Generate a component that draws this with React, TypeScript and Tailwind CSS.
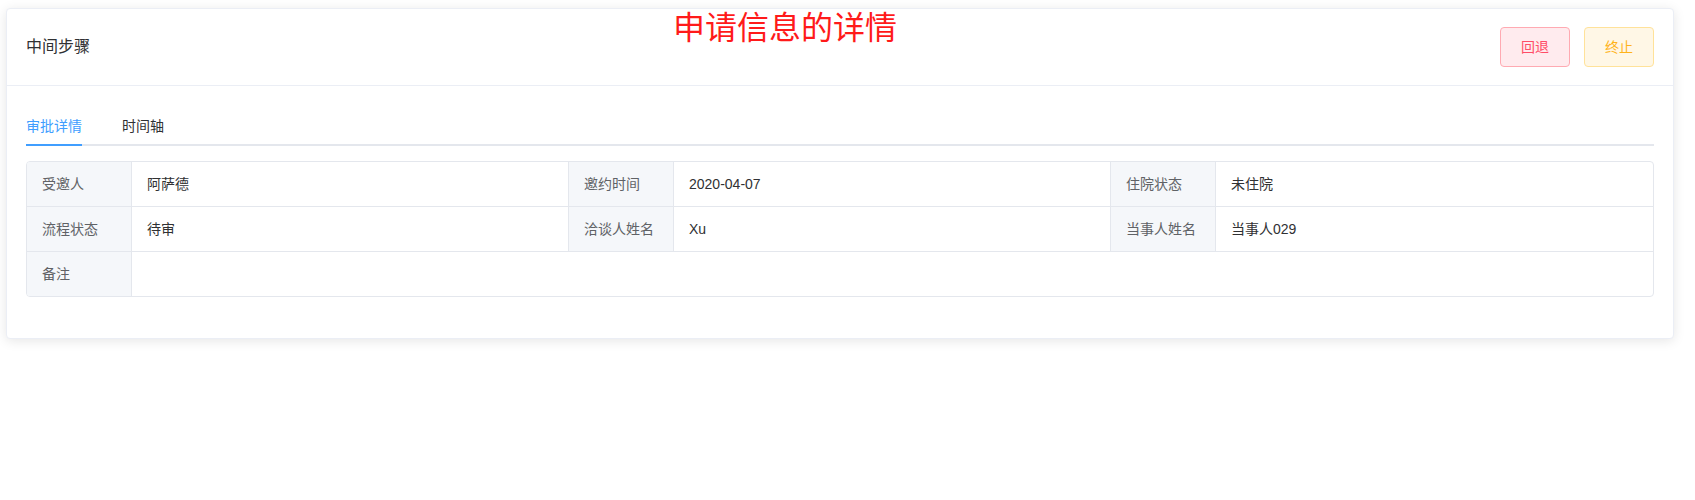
import React from "react";

const font = { fontFamily: '"Liberation Sans", "Noto Sans CJK SC", sans-serif' };

function Label({ children }: { children?: React.ReactNode }) {
  return (
    <div className="h-[44px] flex items-center pl-[15px] bg-[#f5f7fa] text-[14px] text-[#606266] border-r border-[#e4e7ed]">
      {children}
    </div>
  );
}

function Value({ children, last }: { children?: React.ReactNode; last?: boolean }) {
  return (
    <div className={"h-[44px] flex items-center pl-[15px] text-[14px] text-[#303133] " + (last ? "" : "border-r border-[#e4e7ed]")}>
      {children}
    </div>
  );
}

export default function App() {
  return (
    <div className="relative w-[1695px] h-[500px] bg-white" style={font}>
      <div className="pt-[8px] pl-[6px]">
        <div className="w-[1668px] bg-white border border-[#ebeef5] rounded-[4px] shadow-[0_2px_12px_0_rgba(0,0,0,0.1)]">
          <div className="flex items-center justify-between pl-[19px] pr-[19px] py-[18px] border-b border-[#ebeef5]">
            <div className="text-[16px] text-[#303133]">中间步骤</div>
            <div className="flex gap-[14px]">
              <button className="w-[70px] h-[40px] rounded-[4px] border border-[#ffaab2] bg-[#ffebee] text-[#ff4d67] text-[14px] leading-none">
                回退
              </button>
              <button className="w-[70px] h-[40px] rounded-[4px] border border-[#ffe29a] bg-[#fff7e6] text-[#ffb31a] text-[14px] leading-none">
                终止
              </button>
            </div>
          </div>
          <div className="px-[19px] pt-[20px] pb-[41px]">
            <div className="relative flex h-[40px] mb-[15px]">
              <div className="absolute left-0 right-0 bottom-0 h-[2px] bg-[#e4e7ed]" />
              <div className="relative flex items-center text-[14px] text-[#409eff] pr-[20px]">
                审批详情
                <div className="absolute left-0 right-[20px] bottom-0 h-[2px] bg-[#409eff]" />
              </div>
              <div className="relative flex items-center text-[14px] text-[#303133] px-[20px]">时间轴</div>
            </div>
            <div className="border border-[#e4e7ed] rounded-[4px] overflow-hidden">
              <div className="grid grid-cols-[105px_1fr_105px_1fr_105px_1fr] border-b border-[#e4e7ed]">
                <Label>受邀人</Label>
                <Value>阿萨德</Value>
                <Label>邀约时间</Label>
                <Value>2020-04-07</Value>
                <Label>住院状态</Label>
                <Value last>未住院</Value>
              </div>
              <div className="grid grid-cols-[105px_1fr_105px_1fr_105px_1fr] border-b border-[#e4e7ed]">
                <Label>流程状态</Label>
                <Value>待审</Value>
                <Label>洽谈人姓名</Label>
                <Value>Xu</Value>
                <Label>当事人姓名</Label>
                <Value last>当事人029</Value>
              </div>
              <div className="grid grid-cols-[105px_1fr]">
                <Label>备注</Label>
                <Value last></Value>
              </div>
            </div>
          </div>
        </div>
      </div>
      <div className="absolute left-[673px] top-[8px] text-[32px] leading-[40px] text-[#ff1a1a]">申请信息的详情</div>
    </div>
  );
}
